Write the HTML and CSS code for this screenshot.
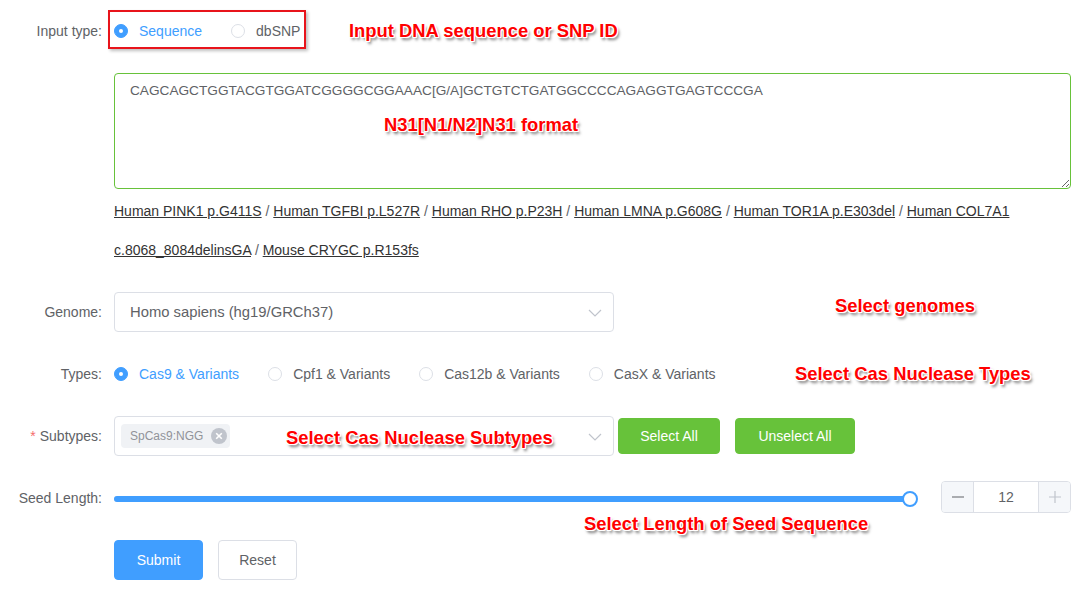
FILE: index.html
```html
<!DOCTYPE html>
<html lang="en">
<head>
<meta charset="utf-8">
<title>CRISPR design form</title>
<link rel="stylesheet" href="styles.css">
</head>
<body>
<div class="page">
  <form class="form">
    <div class="item">
      <div class="label">Input type:</div>
      <div class="content">
        <div class="radio-group">
          <label class="radio checked"><span class="radio-dot"></span><span class="radio-text">Sequence</span></label>
          <label class="radio"><span class="radio-dot"></span><span class="radio-text">dbSNP</span></label>
        </div>
      </div>
    </div>

    <div class="item item-seq">
      <div class="label"></div>
      <div class="content">
        <textarea class="textarea" spellcheck="false">CAGCAGCTGGTACGTGGATCGGGGCGGAAAC[G/A]GCTGTCTGATGGCCCCAGAGGTGAGTCCCGA</textarea>
        <div class="examples">
          <a class="ex">Human PINK1 p.G411S</a><span class="sep"> / </span><a class="ex">Human TGFBI p.L527R</a><span class="sep"> / </span><a class="ex">Human RHO p.P23H</a><span class="sep"> / </span><a class="ex">Human LMNA p.G608G</a><span class="sep"> / </span><a class="ex">Human TOR1A p.E303del</a><span class="sep"> / </span><a class="ex">Human COL7A1 c.8068_8084delinsGA</a><span class="sep"> / </span><a class="ex">Mouse CRYGC p.R153fs</a>
        </div>
      </div>
    </div>

    <div class="item">
      <div class="label">Genome:</div>
      <div class="content">
        <div class="select">
          <span class="select-value">Homo sapiens (hg19/GRCh37)</span>
          <svg class="chev" width="14" height="8" viewBox="0 0 14 8"><polyline points="1,1 7,7 13,1" fill="none" stroke="#c0c4cc" stroke-width="1.2"/></svg>
        </div>
      </div>
    </div>

    <div class="item">
      <div class="label">Types:</div>
      <div class="content">
        <div class="radio-group">
          <label class="radio checked"><span class="radio-dot"></span><span class="radio-text">Cas9 &amp; Variants</span></label>
          <label class="radio"><span class="radio-dot"></span><span class="radio-text">Cpf1 &amp; Variants</span></label>
          <label class="radio"><span class="radio-dot"></span><span class="radio-text">Cas12b &amp; Variants</span></label>
          <label class="radio"><span class="radio-dot"></span><span class="radio-text">CasX &amp; Variants</span></label>
        </div>
      </div>
    </div>

    <div class="item">
      <div class="label"><span class="req">*</span>Subtypes:</div>
      <div class="content row">
        <div class="select">
          <span class="tag">SpCas9:NGG<span class="tag-close"><svg width="16" height="16" viewBox="0 0 16 16"><circle cx="8" cy="8" r="8" fill="#c0c4cc"/><path d="M5.2 5.2 L10.8 10.8 M10.8 5.2 L5.2 10.8" stroke="#fff" stroke-width="1.6"/></svg></span></span>
          <svg class="chev" width="14" height="8" viewBox="0 0 14 8"><polyline points="1,1 7,7 13,1" fill="none" stroke="#c0c4cc" stroke-width="1.2"/></svg>
        </div>
        <button type="button" class="btn btn-green btn-first">Select All</button>
        <button type="button" class="btn btn-green btn-second">Unselect All</button>
      </div>
    </div>

    <div class="item">
      <div class="label">Seed Length:</div>
      <div class="content row">
        <div class="slider">
          <div class="runway"><div class="bar"></div><div class="thumb"></div></div>
        </div>
        <div class="number">
          <span class="num-btn num-dec"><svg width="14" height="14" viewBox="0 0 14 14"><path d="M1 7 H13" stroke="#606266" stroke-width="1.2"/></svg></span>
          <span class="num-val">12</span>
          <span class="num-btn num-inc"><svg width="14" height="14" viewBox="0 0 14 14"><path d="M1 7 H13 M7 1 V13" stroke="#c0c4cc" stroke-width="1.2"/></svg></span>
        </div>
      </div>
    </div>

    <div class="item">
      <div class="label"></div>
      <div class="content row">
        <button type="button" class="btn btn-blue">Submit</button>
        <button type="button" class="btn btn-plain">Reset</button>
      </div>
    </div>
  </form>

  <div class="redbox"></div>
  <div class="note note-input">Input DNA sequence or SNP ID</div>
  <div class="note note-format">N31[N1/N2]N31 format</div>
  <div class="note note-genome">Select genomes</div>
  <div class="note note-types">Select Cas Nuclease Types</div>
  <div class="note note-sub">Select Cas Nuclease Subtypes</div>
  <div class="note note-seed">Select Length of Seed Sequence</div>
</div>
</body>
</html>
```

FILE: styles.css
```css
* { box-sizing: border-box; }
html, body { margin: 0; padding: 0; background: #fff; }
body {
  font-family: "Liberation Sans", Arial, sans-serif;
  font-size: 14px;
  color: #606266;
}
.page {
  position: relative;
  width: 1084px;
  height: 594px;
  padding: 11px 13px 0 0;
  overflow: hidden;
}
.form { width: 1071px; }
.item {
  display: flex;
  margin-bottom: 22px;
}
.label {
  flex: 0 0 114px;
  width: 114px;
  padding-right: 12px;
  text-align: right;
  line-height: 40px;
  font-size: 14px;
  color: #606266;
}
.req { color: #f56c6c; margin-right: 4px; }
.content {
  flex: 1;
  min-width: 0;
  line-height: 40px;
}
.row { display: flex; align-items: center; }

/* radios */
.radio-group { display: flex; align-items: center; height: 40px; }
.radio {
  display: inline-flex;
  align-items: center;
  margin-right: 29px;
  color: #606266;
  font-size: 14px;
  cursor: pointer;
}
.radio-dot {
  width: 14px;
  height: 14px;
  border: 1px solid #dcdfe6;
  border-radius: 50%;
  background: #fff;
  position: relative;
}
.radio-text { padding-left: 11px; line-height: 1; }
.radio.checked .radio-dot { background: #409eff; border-color: #409eff; }
.radio.checked .radio-dot::after {
  content: "";
  position: absolute;
  left: 50%; top: 50%;
  width: 4px; height: 4px;
  margin: -2px 0 0 -2px;
  border-radius: 50%;
  background: #fff;
}
.radio.checked .radio-text { color: #409eff; }

/* textarea */
.textarea {
  display: block;
  width: 957px;
  height: 116px;
  border: 1px solid #67c23a;
  border-radius: 4px;
  padding: 6px 15px 5px;
  font-family: "Liberation Sans", Arial, sans-serif;
  font-size: 13.65px;
  line-height: 21px;
  color: #606266;
  outline: none;
  resize: vertical;
}
.examples {
  margin-top: 3px;
  line-height: 39px;
  font-size: 14px;
  color: #606266;
}
.ex { color: #333; text-decoration: underline; cursor: pointer; }
.sep { color: #606266; }

/* select */
.select {
  position: relative;
  flex: 0 0 500px;
  width: 500px;
  height: 40px;
  border: 1px solid #dcdfe6;
  border-radius: 4px;
  padding: 0 30px 0 15px;
  display: flex;
  align-items: center;
  background: #fff;
}
.select-value { font-size: 14.8px; color: #606266; line-height: 1; }
.chev {
  position: absolute;
  right: 11px;
  top: 16px;
}
.tag {
  display: inline-flex;
  align-items: center;
  height: 24px;
  margin-left: -9px;
  padding: 0 3px 0 9px;
  background: #f0f2f5;
  border-radius: 4px;
  font-size: 12px;
  color: #909399;
  line-height: 1;
}
.tag-close { display: inline-flex; margin-left: 8px; }

/* buttons */
.btn {
  font-family: "Liberation Sans", Arial, sans-serif;
  font-size: 14px;
  line-height: 1;
  border-radius: 4px;
  border: 1px solid #dcdfe6;
  cursor: pointer;
  padding: 0;
}
.btn-green {
  height: 36px;
  background: #67c23a;
  border-color: #67c23a;
  color: #fff;
}
.btn-first { width: 102px; margin-left: 4px; }
.btn-second { width: 120px; margin-left: 15px; }
.btn-blue {
  height: 40px;
  width: 89px;
  background: #409eff;
  border-color: #409eff;
  color: #fff;
}
.btn-plain {
  height: 40px;
  width: 79px;
  margin-left: 15px;
  background: #fff;
  color: #606266;
}

/* slider */
.slider { flex: 1; height: 40px; display: flex; align-items: center; }
.runway {
  position: relative;
  width: 100%;
  height: 6px;
  margin-top: 1px;
  border-radius: 3px;
  background: #e4e7ed;
}
.bar {
  width: 100%;
  height: 6px;
  border-radius: 3px;
  background: #409eff;
}
.thumb {
  position: absolute;
  right: -8px;
  top: -5px;
  width: 16px;
  height: 16px;
  border: 2px solid #409eff;
  border-radius: 50%;
  background: #fff;
}
.number {
  flex: 0 0 130px;
  width: 130px;
  height: 32px;
  margin-left: 31px;
  margin-top: -2px;
  display: flex;
  border: 1px solid #dcdfe6;
  border-radius: 4px;
  overflow: hidden;
}
.num-btn {
  flex: 0 0 32px;
  display: flex;
  align-items: center;
  justify-content: center;
  background: #f5f7fa;
}
.num-dec { border-right: 1px solid #dcdfe6; }
.num-inc { border-left: 1px solid #dcdfe6; }
.num-val {
  flex: 1;
  text-align: center;
  line-height: 30px;
  font-size: 14px;
  color: #606266;
}

/* annotations */
.redbox {
  position: absolute;
  left: 108px;
  top: 10px;
  width: 198px;
  height: 39px;
  border: 2px solid #e8141b;
  box-shadow: 2px 2px 3px rgba(0,0,0,0.25);
}
.note {
  position: absolute;
  font-family: "Liberation Sans", Arial, sans-serif;
  font-weight: bold;
  font-size: 18.4px;
  line-height: 22px;
  color: #ff0000;
  white-space: nowrap;
  text-shadow:
    -1px -1px 0 #fff, 1px -1px 0 #fff, -1px 1px 0 #fff, 1px 1px 0 #fff,
    0 -1px 0 #fff, 0 1px 0 #fff, -1px 0 0 #fff, 1px 0 0 #fff,
    2px 3px 3px rgba(0,0,0,0.55);
}
.note-input { left: 349px; top: 20px; }
.note-format { left: 384px; top: 114px; }
.note-genome { left: 835px; top: 295px; }
.note-types { left: 795px; top: 363px; }
.note-sub { left: 286px; top: 427px; }
.note-seed { left: 584px; top: 513px; }
```
